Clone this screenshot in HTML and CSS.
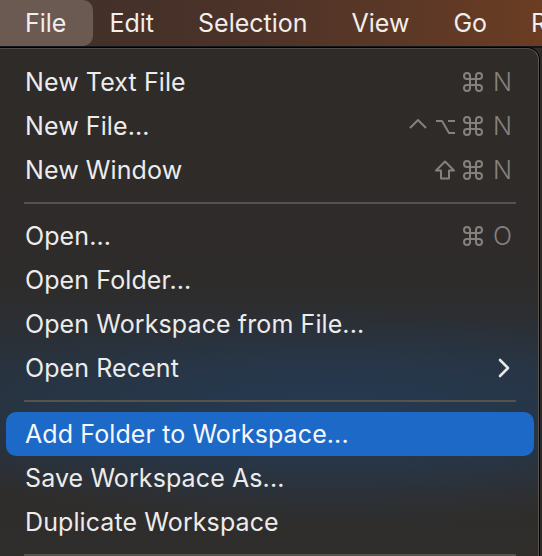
FILE: index.html
```html
<!DOCTYPE html>
<html lang="en">
<head>
    <meta charset="UTF-8">
    <meta name="viewport" content="width=device-width, initial-scale=1.0">
    <title>File menu</title>
    <link rel="stylesheet" href="styles.css">
</head>
<body>
    <div class="menubar">
        <span class="menubar-item active">File</span>
        <span class="menubar-item">Edit</span>
        <span class="menubar-item">Selection</span>
        <span class="menubar-item">View</span>
        <span class="menubar-item">Go</span>
        <span class="menubar-item">Run</span>
    </div>

    <div class="menu">
        <div class="menu-item">
            <span class="label">New Text File</span>
            <span class="shortcut">
                <svg class="key-cmd" width="20" height="20" viewBox="0 0 20 20"><path d="M7 7V4A3 3 0 1 0 4 7H16A3 3 0 1 0 13 4V16A3 3 0 1 0 16 13H4A3 3 0 1 0 7 16Z"/></svg>
                <span class="key-letter">N</span>
            </span>
        </div>
        <div class="menu-item">
            <span class="label">New File...</span>
            <span class="shortcut">
                <svg class="key-ctrl" width="20" height="12" viewBox="0 0 20 12"><polyline points="2,10 10,2 18,10"/></svg>
                <svg class="key-opt" width="21" height="16" viewBox="0 0 21 16"><path d="M1 2H7L14 14H20M13 2H20"/></svg>
                <svg class="key-cmd" width="20" height="20" viewBox="0 0 20 20"><path d="M7 7V4A3 3 0 1 0 4 7H16A3 3 0 1 0 13 4V16A3 3 0 1 0 16 13H4A3 3 0 1 0 7 16Z"/></svg>
                <span class="key-letter">N</span>
            </span>
        </div>
        <div class="menu-item">
            <span class="label">New Window</span>
            <span class="shortcut">
                <svg class="key-shift" width="22" height="20" viewBox="0 0 22 20"><path d="M11 1.5L20 10.5H15V18.5H7V10.5H2Z"/></svg>
                <svg class="key-cmd" width="20" height="20" viewBox="0 0 20 20"><path d="M7 7V4A3 3 0 1 0 4 7H16A3 3 0 1 0 13 4V16A3 3 0 1 0 16 13H4A3 3 0 1 0 7 16Z"/></svg>
                <span class="key-letter">N</span>
            </span>
        </div>

        <div class="separator"></div>

        <div class="menu-item">
            <span class="label">Open...</span>
            <span class="shortcut">
                <svg class="key-cmd" width="20" height="20" viewBox="0 0 20 20"><path d="M7 7V4A3 3 0 1 0 4 7H16A3 3 0 1 0 13 4V16A3 3 0 1 0 16 13H4A3 3 0 1 0 7 16Z"/></svg>
                <span class="key-letter">O</span>
            </span>
        </div>
        <div class="menu-item">
            <span class="label">Open Folder...</span>
        </div>
        <div class="menu-item">
            <span class="label">Open Workspace from File...</span>
        </div>
        <div class="menu-item">
            <span class="label">Open Recent</span>
            <svg class="chevron" width="14" height="20" viewBox="0 0 14 20">
                <polyline points="3,2 11,10 3,18"/>
            </svg>
        </div>

        <div class="separator"></div>

        <div class="menu-item selected">
            <span class="label">Add Folder to Workspace...</span>
        </div>
        <div class="menu-item">
            <span class="label">Save Workspace As...</span>
        </div>
        <div class="menu-item">
            <span class="label">Duplicate Workspace</span>
        </div>

        <div class="separator"></div>
    </div>
</body>
</html>
```

FILE: styles.css
```css
body {
    margin: 0;
    width: 542px;
    height: 556px;
    overflow: hidden;
    font-family: 'Inter', 'Noto Sans', sans-serif;
    background-color: #2e2b29;
    color: #ececec;
}
.menubar {
    display: flex;
    align-items: center;
    height: 46px;
    background: linear-gradient(90deg, #3d2f2a 0%, #4a3229 40%, #5c3826 75%, #6b3d22 100%);
    border-bottom: 2px solid #11171a;
    white-space: nowrap;
}
.menubar-item {
    height: 46px;
    line-height: 46px;
    padding: 0 22px;
    font-size: 25px;
    color: #f2eeec;
}
.menubar-item.active {
    padding: 0 27px 0 25px;
    margin-right: -6px;
    background-color: #6a5a52;
    border-radius: 0 10px 10px 0;
}
.menu {
    margin-left: -10px;
    width: 549px;
    border: 1px solid #5a5652;
    border-top-color: #4f4b47;
    border-radius: 12px 12px 0 0;
    box-shadow: 0 0 0 1px #000;
    padding: 11px 4px 0 15px;
    box-sizing: border-box;
    background:
        radial-gradient(ellipse 420px 110px at 62% 370px, rgba(36, 60, 88, 0.85), rgba(36, 60, 88, 0) 100%),
        linear-gradient(180deg, #2f2b28 0%, #2e2c2b 45%, #29323d 62%, #28323e 74%, #2f2d2c 86%, #302d2b 100%);
}
.menu-item {
    display: flex;
    align-items: center;
    justify-content: space-between;
    height: 44px;
    padding: 0 22px 0 19px;
    border-radius: 10px;
    font-size: 25px;
    letter-spacing: 0.1px;
    color: #ececec;
}
.menu-item.selected {
    background-color: #1d69c7;
    color: #f6f8fb;
}
.shortcut {
    display: flex;
    align-items: center;
    gap: 7px;
    color: #85817d;
}
.shortcut svg {
    fill: none;
    stroke: #85817d;
    stroke-width: 2;
    stroke-linejoin: round;
}
.key-ctrl {
    margin-top: -4px;
}
.key-opt {
    margin-top: 2px;
}
.key-letter {
    margin-left: 3px;
    font-size: 25px;
    font-weight: 300;
    letter-spacing: 0;
}
.chevron {
    margin-right: 1px;
    fill: none;
    stroke: #e6e6e6;
    stroke-width: 2.6;
    stroke-linecap: round;
    stroke-linejoin: round;
}
.separator {
    height: 2px;
    margin: 10px 18px;
    background-color: #56534f;
}
```
